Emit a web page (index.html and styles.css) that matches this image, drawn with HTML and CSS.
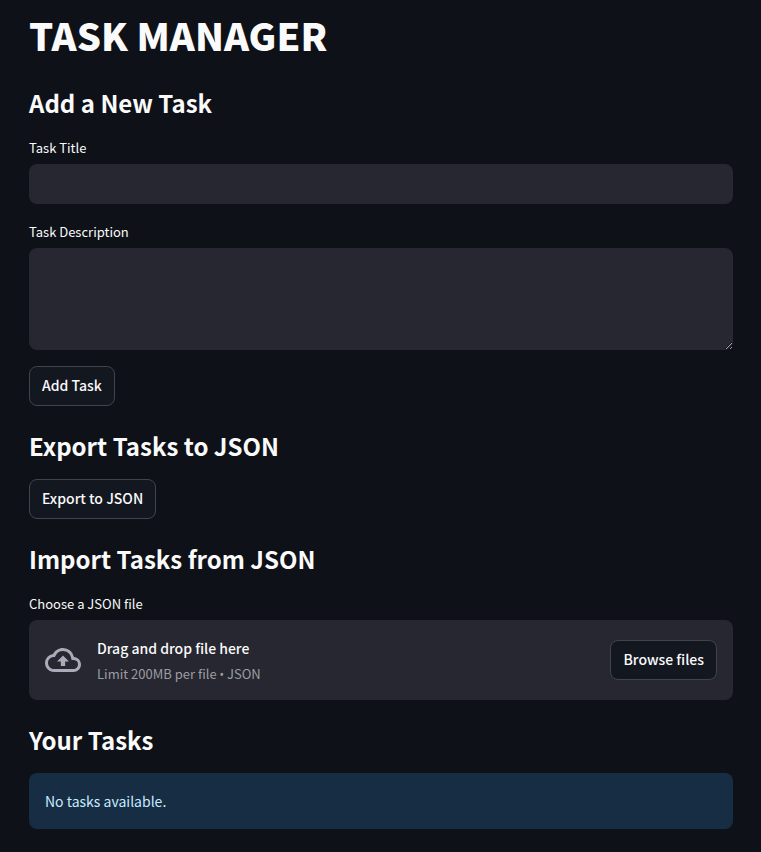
FILE: index.html
```html
<!DOCTYPE html>
<html lang="en">
<head>
<meta charset="utf-8">
<meta name="viewport" content="width=device-width, initial-scale=1">
<title>Task Manager</title>
<link rel="stylesheet" href="styles.css">
</head>
<body>
<main class="page">
  <h1 class="title">TASK MANAGER</h1>

  <section class="section">
    <h2 class="heading">Add a New Task</h2>
    <form class="form">
      <div class="field">
        <label class="label" for="task-title">Task Title</label>
        <input class="control" id="task-title" type="text">
      </div>
      <div class="field">
        <label class="label" for="task-description">Task Description</label>
        <textarea class="control control-area" id="task-description"></textarea>
      </div>
      <button class="button" type="button">Add Task</button>
    </form>
  </section>

  <section class="section">
    <h2 class="heading">Export Tasks to JSON</h2>
    <button class="button" type="button">Export to JSON</button>
  </section>

  <section class="section">
    <h2 class="heading">Import Tasks from JSON</h2>
    <div class="field">
      <label class="label" for="browse">Choose a JSON file</label>
      <div class="dropzone">
        <svg class="cloud" viewBox="0 0 24 24" aria-hidden="true"><path d="M19.35 10.04A7.49 7.49 0 0012 4C9.11 4 6.6 5.64 5.35 8.04A5.994 5.994 0 000 14c0 3.31 2.69 6 6 6h13c2.76 0 5-2.24 5-5 0-2.64-2.05-4.78-4.65-4.96zM19 18H6c-2.21 0-4-1.79-4-4 0-2.05 1.53-3.76 3.56-3.97l1.07-.11.5-.95A5.469 5.469 0 0112 6c2.62 0 4.88 1.86 5.39 4.43l.3 1.5 1.53.11A2.98 2.98 0 0122 15c0 1.65-1.35 3-3 3zM8 13h2.55v3h2.9v-3H16l-4-4z"/></svg>
        <div class="drop-text">
          <span class="drop-title">Drag and drop file here</span>
          <small class="drop-hint">Limit 200MB per file <span class="bullet">•</span> JSON</small>
        </div>
        <button class="button" id="browse" type="button">Browse files</button>
      </div>
    </div>
  </section>

  <section class="section">
    <h2 class="heading">Your Tasks</h2>
    <p class="notice" role="status">No tasks available.</p>
  </section>
</main>
</body>
</html>
```
FILE: styles.css
```css
* {
  box-sizing: border-box;
}

body {
  margin: 0;
  background: #0e1117;
  color: #fafafa;
  font-family: "Source Sans Pro", "Noto Sans CJK SC", sans-serif;
  font-size: 14px;
  font-weight: 400;
  line-height: 24px;
}

.page {
  display: flex;
  flex-direction: column;
  gap: 22px;
  padding: 7px 28px 22px 29px;
}

.title {
  margin: 0;
  font-size: 38px;
  font-weight: 900;
  line-height: 56px;
}

.heading {
  margin: 0 0 15px;
  font-size: 24px;
  font-weight: 700;
  line-height: 36px;
}

.form {
  display: flex;
  flex-direction: column;
  align-items: flex-start;
  gap: 16px;
}

.field {
  display: flex;
  flex-direction: column;
  gap: 6px;
  width: 100%;
  padding-top: 2px;
}

.label {
  font-size: 13px;
  line-height: 20px;
}

.control {
  width: 100%;
  height: 40px;
  margin: 0;
  padding: 8px 12px;
  border: 0;
  border-radius: 8px;
  outline: 0;
  background: #262730;
  color: inherit;
  font: inherit;
}

.control-area {
  height: 102px;
  resize: vertical;
}

.button {
  height: 40px;
  padding: 0 12px 2px;
  border: 1px solid #41444c;
  border-radius: 8px;
  background: #131720;
  color: inherit;
  font: inherit;
  font-weight: 500;
  white-space: nowrap;
}

.dropzone {
  display: flex;
  align-items: center;
  padding: 14px 16px;
  border-radius: 8px;
  background: #262730;
}

.cloud {
  flex: none;
  width: 36px;
  height: 36px;
  margin-right: 16px;
  fill: #a9abba;
}

.drop-text {
  display: flex;
  flex: 1;
  flex-direction: column;
  padding-top: 2px;
  line-height: 25px;
}

.drop-title {
  font-weight: 500;
}

.drop-hint {
  color: #9c9da3;
  font-size: 13px;
}

.bullet {
  font-family: "Noto Sans", sans-serif;
  font-size: 12px;
  line-height: 1;
}

.notice {
  margin: 0;
  padding: 16px;
  border-radius: 8px;
  background: #172d43;
  color: #c7ebff;
}
```
